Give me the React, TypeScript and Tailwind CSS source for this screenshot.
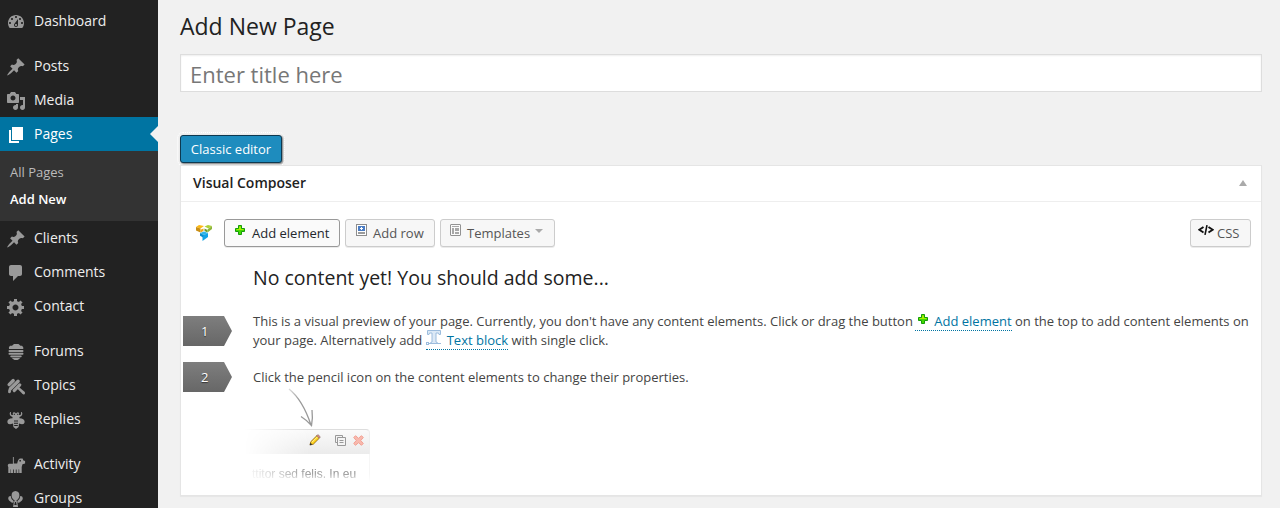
import React from 'react';

const DASHBOARD =
  'M3.76 16h12.48c1.1-1.37 1.76-3.11 1.76-5 0-4.42-3.58-8-8-8s-8 3.58-8 8c0 1.89.66 3.63 1.76 5zM10 4c.55 0 1 .45 1 1s-.45 1-1 1-1-.45-1-1 .45-1 1-1zM6 6c.55 0 1 .45 1 1s-.45 1-1 1-1-.45-1-1 .45-1 1-1zm8 0c.55 0 1 .45 1 1s-.45 1-1 1-1-.45-1-1 .45-1 1-1zm-5.37 5.55L12 7v6c0 1.1-.9 2-2 2s-2-.9-2-2c0-.57.24-1.08.63-1.45zM4 10c.55 0 1 .45 1 1s-.45 1-1 1-1-.45-1-1 .45-1 1-1zm12 0c.55 0 1 .45 1 1s-.45 1-1 1-1-.45-1-1 .45-1 1-1zm-5 3c0-.55-.45-1-1-1s-1 .45-1 1 .45 1 1 1 1-.45 1-1z';
const PIN =
  'M10.44 3.02l1.82-1.82 6.36 6.35-1.83 1.82c-1.05-.68-2.48-.57-3.41.36l-.75.75c-.92.93-1.04 2.35-.35 3.41l-1.83 1.82-2.41-2.41-2.8 2.79c-.42.42-3.38 2.71-3.8 2.29s1.86-3.39 2.28-3.81l2.79-2.79L4.1 9.36l1.83-1.82c1.05.69 2.48.57 3.4-.36l.75-.75c.93-.92 1.05-2.35.36-3.41z';
const MEDIA =
  'M13 11V4c0-.55-.45-1-1-1h-1.67L9 1H5L3.67 3H2c-.55 0-1 .45-1 1v7c0 .55.45 1 1 1h10c.55 0 1-.45 1-1zM7 4.5c1.38 0 2.5 1.12 2.5 2.5S8.38 9.5 7 9.5 4.5 8.38 4.5 7 5.62 4.5 7 4.5zM14 6h5v10.5c0 1.38-1.12 2.5-2.5 2.5S14 17.88 14 16.5s1.12-2.5 2.5-2.5c.17 0 .34.02.5.05V9h-3V6zm-4 8.05V13h2v3.5c0 1.38-1.12 2.5-2.5 2.5S7 17.88 7 16.5 8.12 14 9.5 14c.17 0 .34.02.5.05z';
const PAGES = 'M6 15V2h11v13H6zm-1 1h8v2H3V5h2v11z';
const COMMENTS =
  'M5 2h9c1.1 0 2 .9 2 2v7c0 1.1-.9 2-2 2h-2l-5 5v-5H5c-1.1 0-2-.9-2-2V4c0-1.1.9-2 2-2z';
const GEAR =
  'M18 12h-2.18c-.17.7-.44 1.35-.81 1.93l1.54 1.54-2.1 2.1-1.54-1.54c-.58.36-1.23.63-1.91.79V19H8v-2.18c-.68-.16-1.33-.43-1.91-.79l-1.54 1.54-2.12-2.12 1.54-1.54c-.36-.58-.63-1.23-.79-1.91H1V9.03h2.17c.16-.7.44-1.35.8-1.94L2.43 5.55l2.1-2.1 1.54 1.54c.58-.37 1.24-.64 1.93-.81V2h3v2.18c.68.16 1.33.43 1.91.79l1.54-1.54 2.12 2.12-1.54 1.54c.36.59.64 1.24.8 1.94H18V12zm-8.5 1.5c1.66 0 3-1.34 3-3s-1.34-3-3-3-3 1.34-3 3 1.34 3 3 3z';

function Glyph({ children, active }: { children: React.ReactNode; active?: boolean }) {
  return (
    <svg
      viewBox="0 0 20 20"
      className={active ? 'h-5 w-5 shrink-0 fill-white' : 'h-5 w-5 shrink-0 fill-[#999]'}
      fillRule="evenodd"
    >
      {children}
    </svg>
  );
}

const Hive = () => (
  <>
    <path d="M8 2h4.500l2 1.700h1.500q1.800 1.300 1.300 3.300H3Q2.300 5 4 3.700h2z" />
    <rect x="2.500" y="8" width="15" height="1.900" rx="0.900" />
    <rect x="2.500" y="10.800" width="15" height="1.900" rx="0.900" />
    <rect x="4.300" y="13.500" width="11.400" height="1.700" rx="0.800" />
    <path d="M5.500 15.800h9l-1.700 1.400-1.300.8H8.600l-1.300-.8z" />
  </>
);

const Dipper = () => (
  <>
    <g transform="rotate(-45 9 9)">
      <rect x="3.500" y="2.900" width="9" height="3.400" rx="1.600" />
      <rect x="1.500" y="6.800" width="14" height="3.400" rx="1.600" />
      <rect x="3" y="10.700" width="11" height="3.200" rx="1.500" />
    </g>
    <path d="M12.600 10.700l6.200 5.300q.7 1.300-.3 2.200-1 .7-1.900-.1l-5.700-5.800z" />
    <path d="M3.500 11.500q2.200 3.300 1.200 5-1.200 1.500-2.600 0-.8-1.800 1.400-5z" />
  </>
);

const Bee = () => (
  <>
    <path d="M7 5Q6.200 2.400 8 2.200q1.100 0 2 1.200 1-1.200 2.200-1.200Q13.800 2.600 13 5l1.500-.1q1-1.400.4-2.700l1-.2q1.300 2.200-.5 3.900L13.500 7v1.200q4.900 0 5.200 3.700-.5 3.800-5.700 1.700l-.4 3.300L10 19l-2.600-2.100-.4-3.300q-5.300 2-5.700-1.700.3-3.700 5.200-3.700V7L4.600 5.900Q2.800 4.200 4.100 2l1 .2q-.6 1.300.4 2.700zM7.800 3.800v1.100h1V3.800zm3.500 0v1.100h1V3.800zM8 10.500v1h4v-1zm0 2.300v1h4v-1zm.2 2.300v1h3.600v-1z" />
  </>
);

const Dog = () => (
  <path d="M6.900 2h.9v6.500h3.400Q12 4 14 3.500h2.600l.8 2 1.700.6v2.500l-2.600.7-.8 2.700V18h-2.500v-3.600l-.6-.2V18h-2v-3.500H9.800V18h-2v-3.500h-.8V18H4.900v-3.600l-.4-.2V18H2.300v-5.800Q1 9.500 3 8.700h3.900zM13.400 5v1.600h1.500V5z" />
);

const Balloons = () => (
  <>
    <path d="M9.500 2q3.900.3 3.900 4.300 0 3.500-3 5.300l.9 2 .8 4.400H7l.8-4.400.9-2Q5.600 9.800 5.600 6.300 5.600 2.300 9.500 2zM9 13l-.7 3h2.400L10 13z" />
    <path d="M4.700 6.900Q4.900 10 7.600 12l.1 1.500-1.700.2Q2 11.500 2.200 9 2.500 6.700 4.700 6.900zM14.300 6.900Q14.100 10 11.400 12l-.1 1.500 1.700.2Q17 11.500 16.800 9 16.500 6.700 14.300 6.900z" />
  </>
);

function MenuItem({
  label,
  icon,
  active,
}: {
  label: string;
  icon: React.ReactNode;
  active?: boolean;
}) {
  return (
    <a
      className={
        active
          ? 'relative flex h-[34px] shrink-0 items-center bg-[#0074a2] pl-1.5 text-white'
          : 'relative flex h-[34px] shrink-0 items-center pl-1.5 text-[#eee]'
      }
    >
      <span className="flex pt-0.5">
        <Glyph active={active}>{icon}</Glyph>
      </span>
      <span className="pl-2 text-[14px] leading-[18px]">{label}</span>
      {active && (
        <span className="absolute right-0 top-[9px] h-0 w-0 border-y-8 border-r-8 border-y-transparent border-r-[#f1f1f1]" />
      )}
    </a>
  );
}

function Sidebar() {
  return (
    <nav className="flex h-full w-[158px] shrink-0 flex-col overflow-hidden bg-[#222] pt-1">
      <MenuItem label="Dashboard" icon={<path d={DASHBOARD} />} />
      <div className="h-[11px] shrink-0" />
      <MenuItem label="Posts" icon={<path d={PIN} />} />
      <MenuItem label="Media" icon={<path d={MEDIA} />} />
      <MenuItem label="Pages" icon={<path d={PAGES} />} active />
      <div className="flex h-[70px] shrink-0 flex-col bg-[#333] pl-2.5 pt-2 text-[13px] leading-[27px]">
        <a className="text-[#bbb]">All Pages</a>
        <a className="font-semibold text-white">Add New</a>
      </div>
      <MenuItem label="Clients" icon={<path d={PIN} />} />
      <MenuItem label="Comments" icon={<path d={COMMENTS} />} />
      <MenuItem label="Contact" icon={<path d={GEAR} />} />
      <div className="h-[11px] shrink-0" />
      <MenuItem label="Forums" icon={<Hive />} />
      <MenuItem label="Topics" icon={<Dipper />} />
      <MenuItem label="Replies" icon={<Bee />} />
      <div className="h-[11px] shrink-0" />
      <MenuItem label="Activity" icon={<Dog />} />
      <MenuItem label="Groups" icon={<Balloons />} />
    </nav>
  );
}

function Logo() {
  return (
    <svg viewBox="0 0 16 16" className="h-4 w-4">
      <path d="M0 2L3 0l5 1-3.500 2.500z" fill="#fdb913" />
      <path d="M0 2l4.500 1.500v4L0 5.500z" fill="#c98f16" />
      <path d="M4.500 4.800L7.500 3.600v2.400l-3 1.500z" fill="#eda51a" />
      <path d="M8.500 1.500L12 0l4 1-3.500 2.500z" fill="#aed136" />
      <path d="M8.500 3.600l3 1.400v2.500l-3-1.500z" fill="#6b9a2c" />
      <path d="M11.500 4.500L16 1v3l-4.500 3.500z" fill="#8db53a" />
      <path d="M4 8l4-1.500L12 8l-4 2z" fill="#2fb5ea" />
      <path d="M4 8l4 2v3l-4-2.200z" fill="#0a8fcd" />
      <path d="M7.700 9.900L12 8v4l-5.500 4v-4z" fill="#12a3e6" />
    </svg>
  );
}

function Plus() {
  return (
    <svg viewBox="0 0 10 10" className="inline h-2.5 w-2.5">
      <path d="M3.500.5h3v3h3v3h-3v3h-3v-3h-3v-3h3z" fill="#42d800" stroke="#159c09" />
      <path d="M4 1.500h2V4h2.500v1h-7V4H4z" fill="#a5f000" />
    </svg>
  );
}

function RowIcon() {
  return (
    <svg viewBox="0 0 11 12" className="h-3 w-[11px]">
      <rect x="0.500" y="0.500" width="10" height="11" fill="#fff" stroke="#8d8d8d" />
      <rect x="2" y="2" width="7" height="5" fill="#4a7cc4" />
      <path d="M5 3h1v1h1v1H6v1H5V5H4V4h1z" fill="#fff" />
      <rect x="2" y="8" width="7" height="2" fill="#9b9b9b" />
    </svg>
  );
}

function TemplateIcon() {
  return (
    <svg viewBox="0 0 11 12" className="h-3 w-[11px]">
      <rect x="0.500" y="0.500" width="10" height="11" rx="0.500" fill="#fafafa" stroke="#929292" />
      <path d="M2 2h7v1H2zM2 4h2v6H2zM5 4h4v3H5zM5 8h4v2H5z" fill="#a7a7a7" />
    </svg>
  );
}

function TextIcon() {
  return (
    <svg viewBox="0 0 16 15" className="inline h-[15px] w-4">
      <path
        d="M1.500.5h13v4h-1.500l-.5-1.500h-2.500v9l1.500.7v.8h-7v-.8l1.500-.7v-9H3.500L3 4.500H1.500z"
        fill="#dce9f6"
        stroke="#9cbcdd"
      />
      <path d="M2 13.500h13" stroke="#9cbcdd" />
      <rect x="0.500" y="12.500" width="2" height="2" fill="#fff" stroke="#9cbcdd" />
    </svg>
  );
}

function CodeIcon() {
  return (
    <svg viewBox="0 0 16 10" className="h-2.5 w-4" fill="none" stroke="#111" strokeWidth="1.900">
      <path d="M5.500 2L1.300 4.800l4.200 2.700M10.500 2l4.200 2.800-4.200 2.700" />
      <path d="M9 .2L7 9.800" strokeWidth="1.600" />
    </svg>
  );
}

function Badge({ n }: { n: string }) {
  return (
    <div className="flex h-[30px] w-[49px] items-center bg-gradient-to-b from-[#7e7e7e] to-[#676767] pl-[18px] pt-0.5 text-[13px] text-white [clip-path:polygon(0_0,41px_0,49px_50%,41px_100%,0_100%)] [text-shadow:0_1px_1px_#333]">
      {n}
    </div>
  );
}

function Illustration() {
  return (
    <div className="-mt-1 ml-[63px] w-[126px]">
      <svg viewBox="0 0 126 41" className="block h-[41px] w-[126px]" fill="none">
        <defs>
          <linearGradient id="arrow" x1="0" y1="0" x2="0.600" y2="1">
            <stop offset="0" stopColor="#ddd" />
            <stop offset="0.400" stopColor="#999" />
            <stop offset="1" stopColor="#999" />
          </linearGradient>
        </defs>
        <path
          d="M45 1C55 9 62 22 67 37M57 28.500Q62.500 32 67.500 37.500Q69 30 68 22"
          stroke="url(#arrow)"
          strokeWidth="1.300"
        />
      </svg>
      <div className="[mask-image:linear-gradient(to_right,transparent,#000_52%)]">
        <div className="flex h-[25px] items-center rounded-tr-sm border-r border-t border-[#ddd] border-r-[#eee] bg-gradient-to-b from-[#fafafa] to-[#ebebeb] pb-1 pl-[65px]">
          <svg viewBox="0 0 12 12" className="h-3 w-3">
            <path d="M1 11l.8-3.300L8 1.500l2.500 2.500L4.300 10.200z" fill="#ffd21a" stroke="#8a5d0c" strokeWidth="0.800" />
            <path d="M2.700 8.500L9 2.300" stroke="#fff3a2" />
            <path d="M7.700 1.800L9 .6l2.400 2.300-1.200 1.300z" fill="#e68678" stroke="#777" strokeWidth="0.600" />
            <path d="M.7 11.300L1.500 8.700l1.800 1.700z" fill="#333" />
          </svg>
          <svg viewBox="0 0 11 11" className="ml-3.5 h-[11px] w-[11px]" fill="#f4f4f4" stroke="#999">
            <path d="M.5.5h7v7h-7z" />
            <path d="M2.500 2.500h8v8h-8zM4.500 5.500h4M4.500 7.500h4" />
          </svg>
          <svg viewBox="0 0 11 11" className="ml-[7px] h-[11px] w-[11px]">
            <path
              d="M2.500.7l3 2.600 3-2.600 1.800 1.800-2.600 3 2.600 3-1.800 1.800-3-2.600-3 2.600L.7 8.500l2.600-3-2.600-3z"
              fill="#f8b9ae"
              stroke="#f2a093"
            />
          </svg>
        </div>
        <div className="h-[28px] whitespace-nowrap border-r border-[#f6f6f6] pl-2 pt-[11px] font-['Liberation_Sans',sans-serif] text-[12px] leading-[18px] text-[#999] [mask-image:linear-gradient(to_bottom,#000_70%,transparent)]">
          ttitor sed felis. In eu
        </div>
      </div>
    </div>
  );
}

function Toolbar() {
  return (
    <div className="flex h-7 items-center pl-[15px] pr-2.5 text-[13px] text-[#555]">
      <span className="flex">
        <Logo />
      </span>
      <button className="ml-3 flex h-7 w-[116px] items-center rounded-[3px] border border-[#999] bg-[#fafafa] pl-2.5 text-[#23282d] shadow-[0_1px_0_rgba(0,0,0,0.08)]">
        <span className="mb-1.5 flex">
          <Plus />
        </span>
        <span className="pl-[7px] pt-0.5">Add element</span>
      </button>
      <button className="ml-[5px] flex h-7 w-[90px] items-center rounded-[3px] border border-[#ccc] bg-[#f7f7f7] pl-2.5 shadow-[0_1px_0_rgba(0,0,0,0.08)]">
        <span className="mb-1.5 flex">
          <RowIcon />
        </span>
        <span className="whitespace-nowrap pl-1.5 pt-0.5">Add row</span>
      </button>
      <button className="ml-[5px] flex h-7 w-[115px] items-center rounded-[3px] border border-[#ccc] bg-[#f7f7f7] pl-[9px] shadow-[0_1px_0_rgba(0,0,0,0.08)]">
        <span className="mb-1.5 flex">
          <TemplateIcon />
        </span>
        <span className="pl-1.5 pt-0.5">Templates</span>
        <span className="mb-1 ml-[5px] h-0 w-0 border-x-4 border-t-4 border-x-transparent border-t-[#aaa]" />
      </button>
      <button className="ml-auto flex h-7 w-[61px] items-center rounded-[3px] border border-[#ccc] bg-[#f7f7f7] pl-[7px] shadow-[0_1px_0_rgba(0,0,0,0.08)]">
        <span className="mb-1.5 flex">
          <CodeIcon />
        </span>
        <span className="pl-[3px] pt-0.5">CSS</span>
      </button>
    </div>
  );
}

export default function App() {
  return (
    <div className="flex h-[508px] w-[1280px] overflow-hidden bg-[#f1f1f1] font-['Open_Sans',sans-serif] text-[#444]">
      <Sidebar />
      <main className="flex w-[1104px] flex-col items-start pl-[22px]">
        <h1 className="h-[54px] pt-3 text-[23px] leading-[29px] text-[#222]">Add New Page</h1>
        <div className="flex h-[38px] w-full items-center border border-[#ddd] bg-white pl-[9px] pt-0.5 text-[22px] leading-[30px] text-[#777] shadow-[inset_0_1px_2px_rgba(0,0,0,0.07)]">
          Enter title here
        </div>
        <button className="mt-[43px] h-7 w-[102px] rounded-[3px] border border-[#0e3950] bg-[#1e8cbe] text-[13px] leading-[26px] text-white shadow-[1px_1px_2px_rgba(0,0,0,0.5)] outline-1 outline-dotted outline-offset-2 outline-white">
          Classic editor
        </button>
        <section className="mt-0.5 h-[331px] w-full border border-[#e5e5e5] bg-white shadow-[0_1px_1px_rgba(0,0,0,0.04)]">
          <header className="flex h-9 items-center justify-between border-b border-[#eee] pl-3 pr-3.5 text-[#222]">
            <h2 className="pb-0.5 text-[14px] font-semibold leading-[19px]">Visual Composer</h2>
            <span className="mb-0.5 h-0 w-0 border-x-4 border-b-[6px] border-x-transparent border-b-[#aaa]" />
          </header>
          <div className="pt-[17px]">
            <Toolbar />
            <h3 className="pl-[72px] pt-[17px] text-[19.5px] leading-7 text-[#222]">
              No content yet! You should add some...
            </h3>
            <div className="flex h-[70px] pl-0.5 pt-5">
              <div className="pt-1">
                <Badge n="1" />
              </div>
              <p className="ml-[21px] whitespace-nowrap text-[13px] leading-[19px]">
                This is a visual preview of your page. Currently, you don't have any content elements. Click or drag the button{' '}
                <a className="-ml-px inline-block h-[19px] border-b border-dotted border-[#0074a2] pl-[3px] text-[#0074a2]">
                  <span className="mr-1.5 inline-block -translate-y-1 align-baseline leading-none">
                    <Plus />
                  </span>
                  Add element
                </a>{' '}
                on the top to add content elements on
                <br />
                your page. Alternatively add{' '}
                <a className="inline-block h-[19px] border-b border-dotted border-[#0074a2] text-[#0074a2]">
                  <span className="mr-[5px] inline-block -translate-y-1 align-baseline leading-none">
                    <TextIcon />
                  </span>
                  Text block
                </a>{' '}
                with single click.
              </p>
            </div>
            <div className="flex h-[30px] items-center pl-0.5">
              <Badge n="2" />
              <p className="ml-[21px] text-[13px] leading-[19px]">
                Click the pencil icon on the content elements to change their properties.
              </p>
            </div>
            <Illustration />
          </div>
        </section>
      </main>
    </div>
  );
}
